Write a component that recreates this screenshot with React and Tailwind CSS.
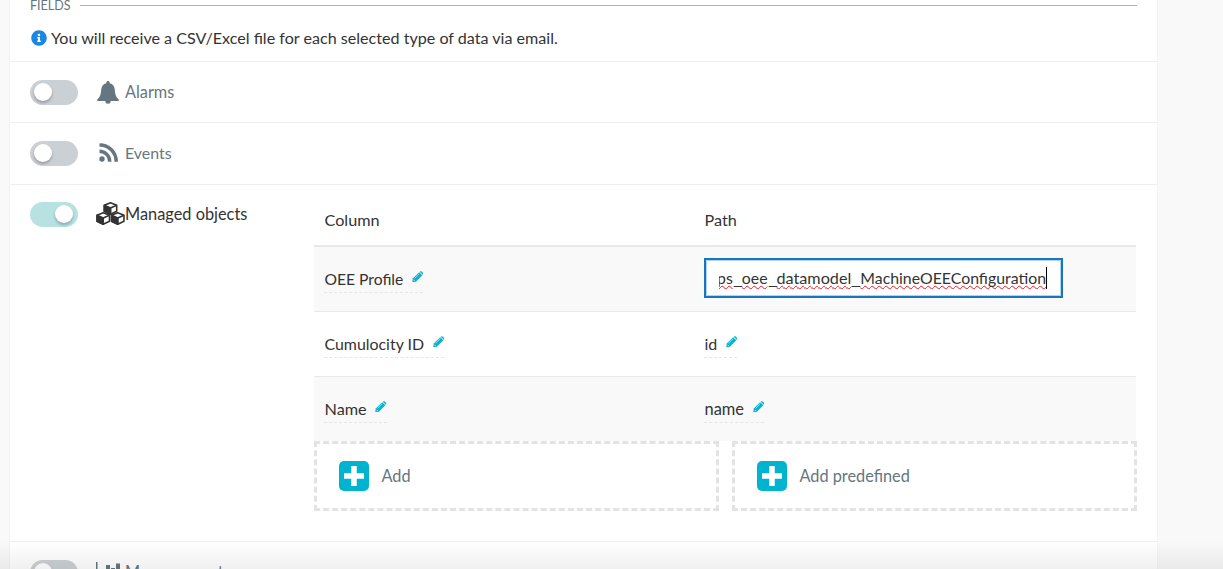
import { FaInfoCircle } from "react-icons/fa";

function Toggle({ on }) {
  return (
    <span className={`flex h-[25px] w-12 shrink-0 items-center rounded-full ${on ? "justify-end bg-[#b8e1e2] pr-[5px]" : "bg-[#cbd0d4] pl-[3.500px]"}`}>
      <span className="mb-px size-[18px] rounded-full bg-white shadow-[0_2px_3px_rgba(0,0,0,0.25)]" />
    </span>
  );
}

function BellIcon() {
  return (
    <svg viewBox="0 0 22 23" className="mb-px ml-px h-[23px] w-[22px] fill-current">
      <path d="M11 0c1 0 1.700.7 1.700 1.700v.6c3.200.7 4.900 3.300 5.100 6.500.3 5 1.400 7.400 3.900 9.700v1.500h-8a2.700 2.700 0 0 1-5.400 0H.3v-1.500c2.500-2.300 3.600-4.700 3.900-9.700.2-3.200 1.900-5.800 5.100-6.500v-.6C9.300.7 10 0 11 0Z" />
    </svg>
  );
}

function FeedIcon() {
  return (
    <svg viewBox="0 0 19 19" className="mb-[3px] ml-[2.500px] h-[19px] w-[19px]">
      <circle cx="3" cy="16" r="2.700" className="fill-current" />
      <path d="M.5 8.300A10.200 10.200 0 0 1 10.700 18.700M.5 2A16.500 16.500 0 0 1 17.200 18.700" fill="none" stroke="currentColor" strokeWidth="3.500" />
    </svg>
  );
}

function Cube({ x, y }) {
  return (
    <g transform={`translate(${x} ${y})`} stroke="currentColor" strokeWidth="1.500" strokeLinejoin="round">
      <path d="M7 .8 13 3.300v6L7 12.200 1 9.300v-6Z" fill="white" />
      <path d="M1 3.300 7 6v6.200L1 9.300Z" fill="currentColor" />
      <path d="M7 6 13 3.300M7 6v6" fill="none" />
    </g>
  );
}

function CubesIcon() {
  return (
    <svg viewBox="0 0 28 23" preserveAspectRatio="none" className="mb-[2px] h-[23px] w-[29px]">
      <Cube x={7} y={0} />
      <Cube x={0} y={10} />
      <Cube x={14} y={10} />
    </svg>
  );
}

function ChartIcon() {
  return (
    <svg viewBox="0 0 28 22" className="mt-px h-[22px] w-7 fill-current">
      <path d="M0 0h1.500v20H26v2H0ZM10 3h4v15h-4ZM5 10h4v8H5ZM15 6h4v12h-4ZM20 1.500h4V18h-4Z" />
    </svg>
  );
}

function PencilIcon() {
  return (
    <svg viewBox="0 0 12 12" className="-mt-[4px] -ml-[0.500px] size-[11.500px] shrink-0">
      <path d="M.2 11.800.8 7.900 7.500 1.200 10.800 4.500 4.100 11.200Z" fill="#0ab3cd" />
      <path d="M8.100.8 8.600.4q.7-.6 1.400 0l1.600 1.600q.6.700 0 1.400l-.4.500Z" fill="#0ab3cd" />
      <path d="M2.600 7.800 7.500 2.900" stroke="#b5e4ec" strokeWidth=".8" />
      <path d="M1.600 9.200 2.800 10.400" stroke="#dff4f7" strokeWidth=".9" />
    </svg>
  );
}

function Row({ icon, label, labelClass, on, height, lineHeight = "h-[61px]", children }) {
  return (
    <div className={`flex shrink-0 border-b border-[#eeefef] pl-5 ${height} ${on ? "text-[#333]" : "text-[#667680]"}`}>
      <div className={`flex w-[284px] shrink-0 items-center ${lineHeight}`}>
        <Toggle on={on} />
        <span className="ml-[18px] flex w-[29px] shrink-0 items-center">{icon}</span>
        <span className={`whitespace-nowrap ${labelClass}`}>{label}</span>
      </div>
      {children}
    </div>
  );
}

function Editable({ children, className = "" }) {
  return (
    <div className="flex">
      <span className={`flex h-[27px] items-center gap-[9px] border-b border-dashed border-[#e5e5e5] pl-[0.5px] ${className}`}>
        {children}
        <PencilIcon />
      </span>
    </div>
  );
}

function Word({ children }) {
  return (
    <span className="underline decoration-[#f01822] decoration-wavy decoration-[1.3px] underline-offset-[1px] [text-decoration-skip-ink:none]">{children}</span>
  );
}

function Underscore() {
  return <span className="inline-block w-[9px] origin-left translate-y-px scale-x-[1.35]">_</span>;
}

function PathInput() {
  return (
    <div className="mb-[2px] flex h-10 w-[359px] items-center border-2 border-[#1776bf] bg-white px-[13px] shadow-[inset_0_0_0_1px_#b4d2e9]">
      <div className="flex h-[22px] w-[328px] items-center justify-end overflow-hidden border-r border-black whitespace-nowrap">
        <span className="text-[15.850px]">
          <Word>ps</Word><Underscore /><Word>oee</Word><Underscore /><span className="text-[16.200px]"><Word>datamodel</Word></span><Underscore /><Word>MachineOEEConfiguration</Word>
        </span>
      </div>
    </div>
  );
}

function AddBox({ label }) {
  return (
    <div className="flex h-[70px] flex-1 items-center border-3 border-dashed border-[#e3e3e3] pl-[22px] text-[16.300px] text-[#667680]">
      <svg viewBox="0 0 30 30" className="mr-[12.500px] mb-px size-[30px]">
        <rect width="30" height="30" rx="5" fill="#00b4d0" />
        <path d="M15 5v20M5 15h20" stroke="white" strokeWidth="5.500" />
      </svg>
      <span className="pb-px">{label}</span>
    </div>
  );
}

export default function App() {
  return (
    <div className="relative h-[569px] w-[1223px] overflow-hidden bg-[#f9f9f9] pl-[10px] font-['Lato',sans-serif] text-[16px] leading-5 text-[#333]">
      <div className="flex h-[569px] w-[1147px] flex-col overflow-hidden bg-white shadow-[0_0_2px_rgba(0,0,0,0.08)]">
        <div className="flex h-[62px] shrink-0 flex-col border-b border-[#eeefef] px-5">
          <div className="flex h-[11px] items-center gap-[10px]">
            <span className="w-10 text-[12.500px] leading-[11px] whitespace-nowrap text-[#667680]">FIELDS</span>
            <span className="h-px flex-1 bg-[#aeb2b8]" />
          </div>
          <div className="mt-[16px] flex h-[22px] items-center">
            <FaInfoCircle className="mr-[4px] ml-[1px] size-4 text-[#1b87e0]" />
            <span className="text-[16.130px] whitespace-nowrap">You will receive a CSV/Excel file for each selected type of data via email.</span>
          </div>
        </div>
        <Row icon={<BellIcon />} label="Alarms" labelClass="pb-px text-[16.300px]" height="h-[61px]" />
        <Row icon={<FeedIcon />} label="Events" labelClass="pb-[2px] text-[15.900px]" height="h-[62px]" />
        <Row icon={<CubesIcon />} label="Managed objects" labelClass="pb-px text-[16.350px]" on height="h-[357px]" lineHeight="h-[59px]">
          <div className="flex w-[823px] flex-col">
            <div className="mr-px grid h-[62px] grid-cols-[380px_1fr] items-center border-b-2 border-[#e8e9e9] px-[10.500px] pt-[9px]">
              <span className="text-[16.200px]">Column</span>
              <span className="text-[16.200px]">Path</span>
            </div>
            <div className="mr-px grid h-[65px] grid-cols-[380px_1fr] items-center border-b border-[#e9e9e9] bg-[#f9f9f9] px-[10px]">
              <Editable className="text-[15.650px]">OEE Profile</Editable>
              <PathInput />
            </div>
            <div className="mr-px grid h-[65px] grid-cols-[380px_1fr] items-center border-b border-[#e9e9e9] px-[10px]">
              <Editable className="text-[15.900px]">Cumulocity ID</Editable>
              <Editable>id</Editable>
            </div>
            <div className="mr-px grid h-[64px] grid-cols-[380px_1fr] items-center bg-[#f9f9f9] px-[10px]">
              <Editable className="text-[16.250px]">Name</Editable>
              <Editable className="text-[16.450px]">name</Editable>
            </div>
            <div className="flex gap-[13px]">
              <AddBox label="Add" />
              <AddBox label="Add predefined" />
            </div>
          </div>
        </Row>
        <Row icon={<ChartIcon />} label="Measurements" labelClass="pb-px text-[16.300px]" height="h-[61px]" />
      </div>
      <div className="pointer-events-none absolute inset-x-0 bottom-0 h-7 bg-linear-to-b from-black/0 to-black/6" />
    </div>
  );
}
